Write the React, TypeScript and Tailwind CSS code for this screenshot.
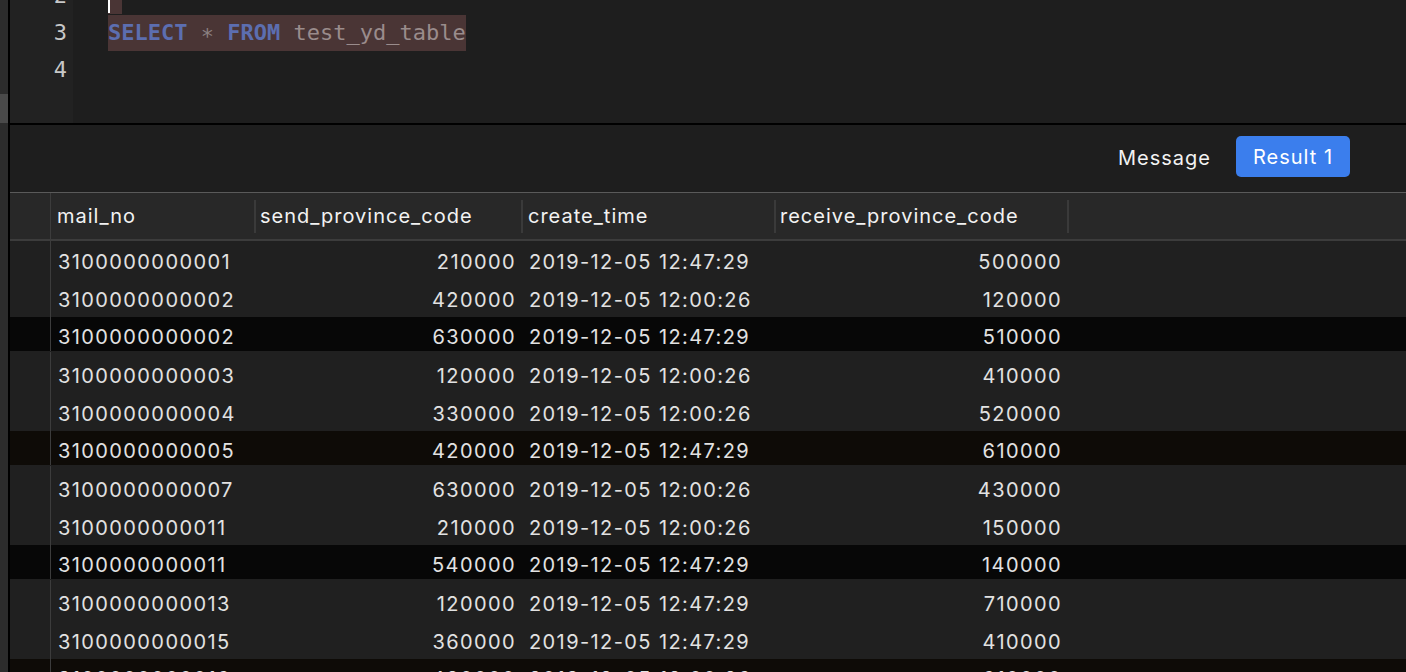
const rows = [
  ["3100000000001", "210000", "2019-12-05 12:47:29", "500000"],
  ["3100000000002", "420000", "2019-12-05 12:00:26", "120000"],
  ["3100000000002", "630000", "2019-12-05 12:47:29", "510000"],
  ["3100000000003", "120000", "2019-12-05 12:00:26", "410000"],
  ["3100000000004", "330000", "2019-12-05 12:00:26", "520000"],
  ["3100000000005", "420000", "2019-12-05 12:47:29", "610000"],
  ["3100000000007", "630000", "2019-12-05 12:00:26", "430000"],
  ["3100000000011", "210000", "2019-12-05 12:00:26", "150000"],
  ["3100000000011", "540000", "2019-12-05 12:47:29", "140000"],
  ["3100000000013", "120000", "2019-12-05 12:47:29", "710000"],
  ["3100000000015", "360000", "2019-12-05 12:47:29", "410000"],
  ["3100000000016", "480000", "2019-12-05 12:00:26", "610000"],
];

// every third row is the dark striped one, and it has a warm tint on some rows
const darkBg = ["bg-[#070707]", "bg-[#0e0b07]"];

const Editor = () => (
  <div className="flex h-[123px] shrink-0 overflow-hidden bg-[#1e1e1e]">
    <div className="w-[63px] shrink-0 bg-[#222222] pr-[6px] text-right text-[22px] text-[#c8c8c8] font-['DejaVu_Sans_Mono',monospace]">
      <div className="-mt-[23px]">
        <div className="h-[37px] leading-[37px]">2</div>
        <div className="h-[37px] leading-[37px]">3</div>
        <div className="h-[37px] leading-[37px]">4</div>
      </div>
    </div>
    <div className="pl-[35px] text-[22px] font-['DejaVu_Sans_Mono',monospace]">
      <div className="-mt-[23px]">
        <div className="h-[37px] flex items-end">
          <div className="relative h-[14px] w-[14px] bg-[#4a3535]">
            <div className="absolute left-0 top-0 h-[13px] w-[2px] bg-white" />
          </div>
        </div>
        <div className="h-[37px] flex items-center">
          <span className="bg-[#4a3535] leading-[36px] whitespace-pre">
            <span className="font-bold text-[#5c6eb0]">SELECT</span>
            <span className="text-[#8a8080]"> <span className="inline-block translate-y-[4px]">*</span> </span>
            <span className="font-bold text-[#5c6eb0]">FROM</span>
            <span className="text-[#9a8c8c]"> test_yd_table</span>
          </span>
        </div>
        <div className="h-[37px]" />
      </div>
    </div>
  </div>
);

const Tabs = () => (
  <div className="flex h-[67px] shrink-0 items-center justify-end gap-[25px] bg-[#1e1e1e] pr-[56px] pb-[4px] text-[20px] tracking-[1px] text-[#f2f2f2]">
    <span className="pt-[2px]">Message</span>
    <button className="h-[41px] w-[114px] rounded-[5px] bg-[#3b7eed] text-white">Result 1</button>
  </div>
);

const HeadCell = ({ w, pl, children }: { w: string; pl: string; children: React.ReactNode }) => (
  <div className={`${w} ${pl} flex shrink-0 items-center justify-between`}>
    <span>{children}</span>
    <div className="h-[33px] w-[2px] bg-[#3a3a3a]" />
  </div>
);

const Header = () => (
  <div className="flex h-[49px] shrink-0 border-t border-[#5a5a5a] border-b-2 border-b-[#3c3c3c] bg-[#282828] text-[20px] tracking-[1px] text-[#f2f2f2]">
    <div className="w-[41px] shrink-0 border-r border-[#3c3c3c]" />
    <HeadCell w="w-[205px]" pl="pl-[6px]">mail_no</HeadCell>
    <HeadCell w="w-[267px]" pl="pl-[4px]">send_province_code</HeadCell>
    <HeadCell w="w-[253px]" pl="pl-[5px]">create_time</HeadCell>
    <HeadCell w="w-[293px]" pl="pl-[4px]">receive_province_code</HeadCell>
    <div className="flex-1" />
  </div>
);

const Row = ({ r, i }: { r: string[]; i: number }) => {
  const dark = i % 3 === 2;
  const bg = dark
    ? `${darkBg[Math.floor(i / 3) % 2]} border-b-4 border-[#202020] pt-[6px]`
    : "bg-[#202020] pt-[3px]";
  return (
    <div className={`flex h-[38px] shrink-0 items-center text-[20px] tracking-[1.4px] text-[#e2e2e2] ${bg}`}>
      <div className="-mt-[6px] h-[calc(100%+6px)] w-[41px] shrink-0 border-r border-[#3c3c3c]" />
      <div className="w-[205px] shrink-0 pl-[7px]">{r[0]}</div>
      <div className="w-[267px] shrink-0 pr-[7px] text-right">{r[1]}</div>
      <div className="w-[253px] shrink-0 pl-[6px]">{r[2]}</div>
      <div className="w-[293px] shrink-0 pr-[7px] text-right">{r[3]}</div>
      <div className="flex-1" />
    </div>
  );
};

export default function App() {
  return (
    <div className="flex h-[672px] w-[1406px] overflow-hidden bg-[#1e1e1e] font-['Inter',sans-serif]">
      <div className="flex w-[8px] shrink-0 flex-col bg-[#2c2c2c]">
        <div className="h-[94px] shrink-0" />
        <div className="h-[29px] shrink-0 bg-[#4a4a4a]" />
      </div>
      <div className="w-[2px] shrink-0 bg-black" />
      <div className="flex min-w-0 flex-1 flex-col">
        <Editor />
        <div className="h-[2px] shrink-0 bg-black" />
        <Tabs />
        <Header />
        <div className="flex flex-col">
          {rows.map((r, i) => (
            <Row key={i} r={r} i={i} />
          ))}
        </div>
      </div>
    </div>
  );
}
